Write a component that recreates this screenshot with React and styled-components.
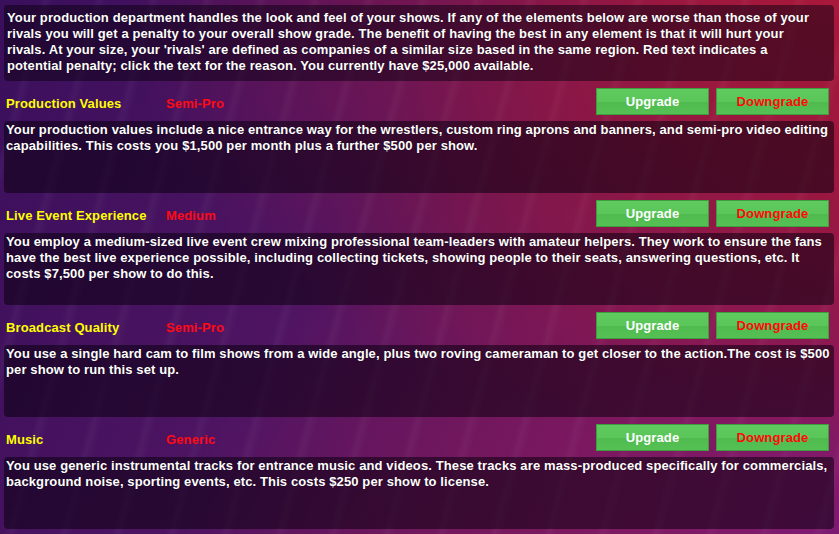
import React from "react";
import styled, { createGlobalStyle } from "styled-components";

const GlobalStyle = createGlobalStyle`
    html, body {
        margin: 0;
        padding: 0;
        width: 839px;
        height: 534px;
        overflow: hidden;
    }
    body {
        font-family: "Liberation Sans", Arial, sans-serif;
        font-size: 13px;
        font-weight: bold;
        letter-spacing: 0.12px;
    }
`;

const Screen = styled.div`
    position: relative;
    width: 839px;
    height: 534px;
    box-sizing: border-box;
    padding: 5px 5px 0 4px;
    display: flex;
    flex-direction: column;
    background:
        repeating-linear-gradient(
            105deg,
            rgba(255, 255, 255, 0) 0px,
            rgba(255, 255, 255, 0) 38px,
            rgba(255, 255, 255, 0.035) 44px,
            rgba(255, 255, 255, 0) 52px
        ),
        radial-gradient(ellipse at 100% 0%, #a8183a 0%, rgba(168, 24, 58, 0) 60%),
        radial-gradient(ellipse at 100% 100%, #7c1a72 0%, rgba(124, 26, 114, 0) 55%),
        linear-gradient(115deg, #3a0f5c 0%, #4e1462 40%, #7c1648 75%, #9a1638 100%);
`;

const Panel = styled.div`
    background: rgba(10, 0, 15, ${(p) => p.$shade});
    border-radius: 4px;
    color: #ffffff;
    line-height: 16px;
    text-shadow: 0 0 1px rgba(0, 0, 0, 0.6);
`;

const Intro = styled(Panel)`
    height: 76px;
    box-sizing: border-box;
    padding: 5px 11px 0 3px;
`;

const Section = styled.section`
    display: flex;
    flex-direction: column;
    margin-top: 7px;
`;

const HeaderRow = styled.div`
    display: flex;
    align-items: center;
    height: 27px;
    padding-left: 2px;
`;

const Title = styled.span`
    width: 160px;
    padding-top: 3px;
    color: #ffff00;
`;

const Level = styled.span`
    flex: 1;
    padding-top: 3px;
    color: #ff0a14;
`;

const Buttons = styled.div`
    display: flex;
    gap: 7px;
    margin-right: 5px;
`;

const Button = styled.button`
    width: 113px;
    height: 27px;
    border: 1px solid #3d9e3d;
    background: linear-gradient(#5fcb5f 0%, #5ac65a 50%, #4fbb4f 52%, #55c155 100%);
    color: ${(p) => (p.$danger ? "#ff0a0a" : "#ffffff")};
    font-family: "Liberation Sans", Arial, sans-serif;
    font-size: 13px;
    font-weight: bold;
    letter-spacing: 0.12px;
    padding: 0;
    cursor: pointer;
`;

const Description = styled(Panel)`
    height: 72px;
    box-sizing: border-box;
    margin-top: 6px;
    padding: 1px 1px 0 2px;
`;

const sections = [
    {
        title: "Production Values",
        level: "Semi-Pro",
        text: "Your production values include a nice entrance way for the wrestlers, custom ring aprons and banners, and semi-pro video editing capabilities. This costs you $1,500 per month plus a further $500 per show.",
    },
    {
        title: "Live Event Experience",
        level: "Medium",
        text: "You employ a medium-sized live event crew mixing professional team-leaders with amateur helpers. They work to ensure the fans have the best live experience possible, including collecting tickets, showing people to their seats, answering questions, etc. It costs $7,500 per show to do this.",
    },
    {
        title: "Broadcast Quality",
        level: "Semi-Pro",
        text: "You use a single hard cam to film shows from a wide angle, plus two roving cameraman to get closer to the action.The cost is $500 per show to run this set up.",
    },
    {
        title: "Music",
        level: "Generic",
        text: "You use generic instrumental tracks for entrance music and videos. These tracks are mass-produced specifically for commercials, background noise, sporting events, etc. This costs $250 per show to license.",
    },
];

function App() {
    return (
        <>
            <GlobalStyle />
            <Screen>
                <Intro $shade={0.5}>
                    Your production department handles the look and feel of your shows. If any of the elements below are worse than those of your rivals you will get a penalty to your overall show grade. The benefit of having the best in any element is that it will hurt your rivals. At your size, your 'rivals' are defined as companies of a similar size based in the same region. Red text indicates a potential penalty; click the text for the reason. You currently have $25,000 available.
                </Intro>
                {sections.map((s) => (
                    <Section key={s.title}>
                        <HeaderRow>
                            <Title>{s.title}</Title>
                            <Level>{s.level}</Level>
                            <Buttons>
                                <Button>Upgrade</Button>
                                <Button $danger>Downgrade</Button>
                            </Buttons>
                        </HeaderRow>
                        <Description $shade={0.55}>{s.text}</Description>
                    </Section>
                ))}
            </Screen>
        </>
    );
}

export default App;
